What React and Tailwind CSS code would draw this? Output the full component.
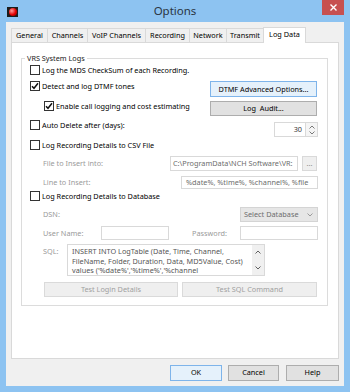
import React from "react";

function Check({ checked, label, className = "" }) {
  return (
    <div className={`flex items-center gap-[2px] h-[14px] ${className}`}>
      <div className="w-[10px] h-[10px] border border-[#333333] bg-white flex items-center justify-center shrink-0">
        {checked && (
          <svg width="8" height="8" viewBox="0 0 8 8">
            <path d="M1 4.2 L3 6.3 L7 1.3" stroke="#111" strokeWidth="1.5" fill="none" />
          </svg>
        )}
      </div>
      <span className="whitespace-nowrap">{label}</span>
    </div>
  );
}

function Chevron({ up = false, color = "#7a7a7a" }) {
  return (
    <svg width="6" height="4" viewBox="0 0 6 4">
      <path d={up ? "M0.5 3.5 L3 1 L5.5 3.5" : "M0.5 0.5 L3 3 L5.5 0.5"} stroke={color} strokeWidth="1" fill="none" />
    </svg>
  );
}

export default function App() {
  return (
    <div className="w-[350px] h-[392px] bg-[#8dc3f1] flex flex-col font-['Noto_Sans',sans-serif] text-[7.3px] text-black leading-none select-none overflow-hidden">
      {/* title bar */}
      <div className="h-[22px] flex items-start shrink-0">
        <div className="flex-1 flex">
          <div className="mt-[7px] ml-[7px] w-[11px] h-[10px] bg-[#1c1c1c] flex items-center justify-center">
            <div className="w-[8px] h-[8px] rounded-full bg-[radial-gradient(circle_at_35%_35%,#ff9a9a,#e30000_55%,#7a0000)]"></div>
          </div>
        </div>
        <div className="text-[11.5px] text-[#2a3441] mt-[5px]">Options</div>
        <div className="flex-1 flex justify-end">
          <div className="w-[22px] h-[15px] mr-[6px] bg-[#c75050] flex items-center justify-center">
            <svg width="7" height="7" viewBox="0 0 7 7">
              <path d="M0.5 0.5 L6.5 6.5 M6.5 0.5 L0.5 6.5" stroke="#fff" strokeWidth="1.4" />
            </svg>
          </div>
        </div>
      </div>

      {/* client */}
      <div className="mx-[6px] mb-[6px] flex-1 bg-[#f0f0f0] flex flex-col px-[5px] pt-[5px] pb-[5px]">
        {/* tabs */}
        <div className="h-[15px] flex items-end relative z-10 shrink-0">
          <div className="w-[37px] h-[14px] border border-b-0 border-[#d9d9d9] flex items-center justify-center">General</div>
          <div className="w-[41px] h-[14px] -ml-[1px] border border-b-0 border-[#d9d9d9] flex items-center justify-center">Channels</div>
          <div className="w-[59px] h-[14px] -ml-[1px] border border-b-0 border-[#d9d9d9] flex items-center justify-center">VoIP Channels</div>
          <div className="w-[45px] h-[14px] -ml-[1px] border border-b-0 border-[#d9d9d9] flex items-center justify-center">Recording</div>
          <div className="w-[38px] h-[14px] -ml-[1px] border border-b-0 border-[#d9d9d9] flex items-center justify-center">Network</div>
          <div className="w-[38px] h-[14px] -ml-[1px] border border-b-0 border-[#d9d9d9] flex items-center justify-center">Transmit</div>
          <div className="w-[43px] h-[16px] -ml-[1px] -mb-[1px] bg-white border border-b-0 border-[#d9d9d9] flex items-center justify-center pb-[1px]">Log Data</div>
        </div>

        {/* panel */}
        <div className="h-[317px] shrink-0 bg-white border border-[#d9d9d9] flex flex-col">
          <fieldset className="mt-[12px] ml-[9px] mr-[10px] border border-[#dcdcdc] px-0 pb-[8px]">
            <legend className="ml-[3px] px-[2px] text-[#1a1a1a]">VRS System Logs</legend>
            <div className="flex flex-col pl-[8px] pr-[9px]">
              {/* R1 */}
              <Check className="mt-[1px]" label="Log the MDS CheckSum of each Recording." />
              {/* R2 */}
              <div className="h-[20px] flex items-start justify-between">
                <Check className="mt-[2px]" checked label="Detect and log DTMF tones" />
                <div className="mt-[4px] mr-[1px] w-[107px] h-[16px] bg-[#e5f1fb] border border-[#7eb4ea] flex items-center justify-center">DTMF Advanced Options...</div>
              </div>
              {/* R3 */}
              <div className="h-[20px] flex items-start justify-between">
                <Check className="mt-[2px] ml-[14px]" checked label="Enable call logging and cost estimating" />
                <div className="mt-[4px] mr-[1px] w-[107px] h-[15px] bg-[#e1e1e1] border border-[#adadad] flex items-center justify-center">Log&nbsp; Audit...</div>
              </div>
              {/* R4 */}
              <div className="h-[20px] flex items-start justify-between">
                <Check className="mt-[1px]" label="Auto Delete after (days):" />
                <div className="mt-[5px] w-[44px] h-[15px] flex">
                  <div className="flex-1 border border-[#d9d9d9] bg-white flex items-center justify-end pr-[3px] text-[#333]">30</div>
                  <div className="w-[13px] -ml-[1px] border border-[#d9d9d9] bg-[#f5f5f5] flex flex-col items-center justify-center gap-[2px]">
                    <Chevron up />
                    <Chevron />
                  </div>
                </div>
              </div>
              {/* R5 */}
              <Check className="mt-[1px]" label="Log Recording Details to CSV File" />
              {/* R6 */}
              <div className="mt-[4px] h-[15px] flex items-center">
                <span className="flex-1 pl-[13px] text-[#9a9a9a] whitespace-nowrap">File to Insert into:</span>
                <div className="w-[128px] h-full border border-[#d9d9d9] flex items-center pl-[2px] overflow-hidden whitespace-nowrap text-[#6d6d6d]">C:\ProgramData\NCH Software\VR:</div>
                <div className="ml-[4px] mr-[1px] w-[15px] h-full bg-[#efefef] border border-[#d9d9d9] flex items-center justify-center text-[#8a8a8a]">...</div>
              </div>
              {/* R7 */}
              <div className="mt-[5px] h-[13px] flex items-center">
                <span className="flex-1 pl-[13px] text-[#9a9a9a] whitespace-nowrap">Line to Insert:</span>
                <div className="w-[137px] h-full border border-[#d9d9d9] flex items-center pl-[4px] overflow-hidden whitespace-nowrap text-[#6d6d6d]">%date%, %time%, %channel%, %file</div>
              </div>
              {/* R8 */}
              <Check label="Log Recording Details to Database" />
              {/* R9 */}
              <div className="mt-[4px] h-[15px] flex items-center">
                <span className="flex-1 pl-[13px] text-[#9a9a9a]">DSN:</span>
                <div className="w-[78px] h-full bg-[#e6e6e6] border border-[#d4d4d4] flex items-center justify-between pl-[3px] pr-[4px] text-[#6d6d6d]">
                  <span>Select Database</span>
                  <Chevron color="#9a9a9a" />
                </div>
              </div>
              {/* R10 */}
              <div className="mt-[4px] h-[14px] flex items-center">
                <span className="w-[71px] pl-[13px] text-[#9a9a9a] whitespace-nowrap">User Name:</span>
                <div className="w-[68px] h-full border border-[#d9d9d9]"></div>
                <span className="flex-1 text-right pr-[13px] text-[#9a9a9a]">Password:</span>
                <div className="w-[78px] h-full border border-[#d9d9d9]"></div>
              </div>
              {/* R11 */}
              <div className="mt-[4px] h-[32px] flex items-start">
                <span className="w-[37px] pl-[13px] pt-[4px] text-[#9a9a9a]">SQL:</span>
                <div className="w-[198px] h-full border border-[#d9d9d9] flex">
                  <div className="flex-1 pl-[4px] pt-[2px] text-[#555] leading-[9.5px] whitespace-nowrap overflow-hidden">
                    <div>INSERT INTO LogTable (Date, Time, Channel,</div>
                    <div>FileName, Folder, Duration, Data, MD5Value, Cost)</div>
                    <div>values ('%date%','%time%','%channel</div>
                  </div>
                  <div className="w-[12px] bg-[#f0f0f0] flex flex-col items-center justify-between py-[5px]">
                    <Chevron up color="#606060" />
                    <Chevron color="#606060" />
                  </div>
                </div>
              </div>
              {/* R12 */}
              <div className="mt-[6px] h-[15px] flex items-center">
                <div className="ml-[14px] w-[134px] h-full bg-[#efefef] border border-[#dadada] flex items-center justify-center text-[#a0a0a0]">Test Login Details</div>
                <div className="ml-[4px] w-[135px] h-full bg-[#efefef] border border-[#dadada] flex items-center justify-center text-[#a0a0a0]">Test SQL Command</div>
              </div>
            </div>
          </fieldset>
        </div>

        {/* bottom buttons */}
        <div className="mt-[6px] h-[16px] flex justify-end shrink-0">
          <div className="w-[52px] h-full bg-[#e5f1fb] border border-[#7eb4ea] flex items-center justify-center">OK</div>
          <div className="ml-[6px] w-[51px] h-full bg-[#e1e1e1] border border-[#adadad] flex items-center justify-center">Cancel</div>
          <div className="ml-[7px] w-[53px] h-full bg-[#e1e1e1] border border-[#adadad] flex items-center justify-center">Help</div>
        </div>
      </div>
    </div>
  );
}
